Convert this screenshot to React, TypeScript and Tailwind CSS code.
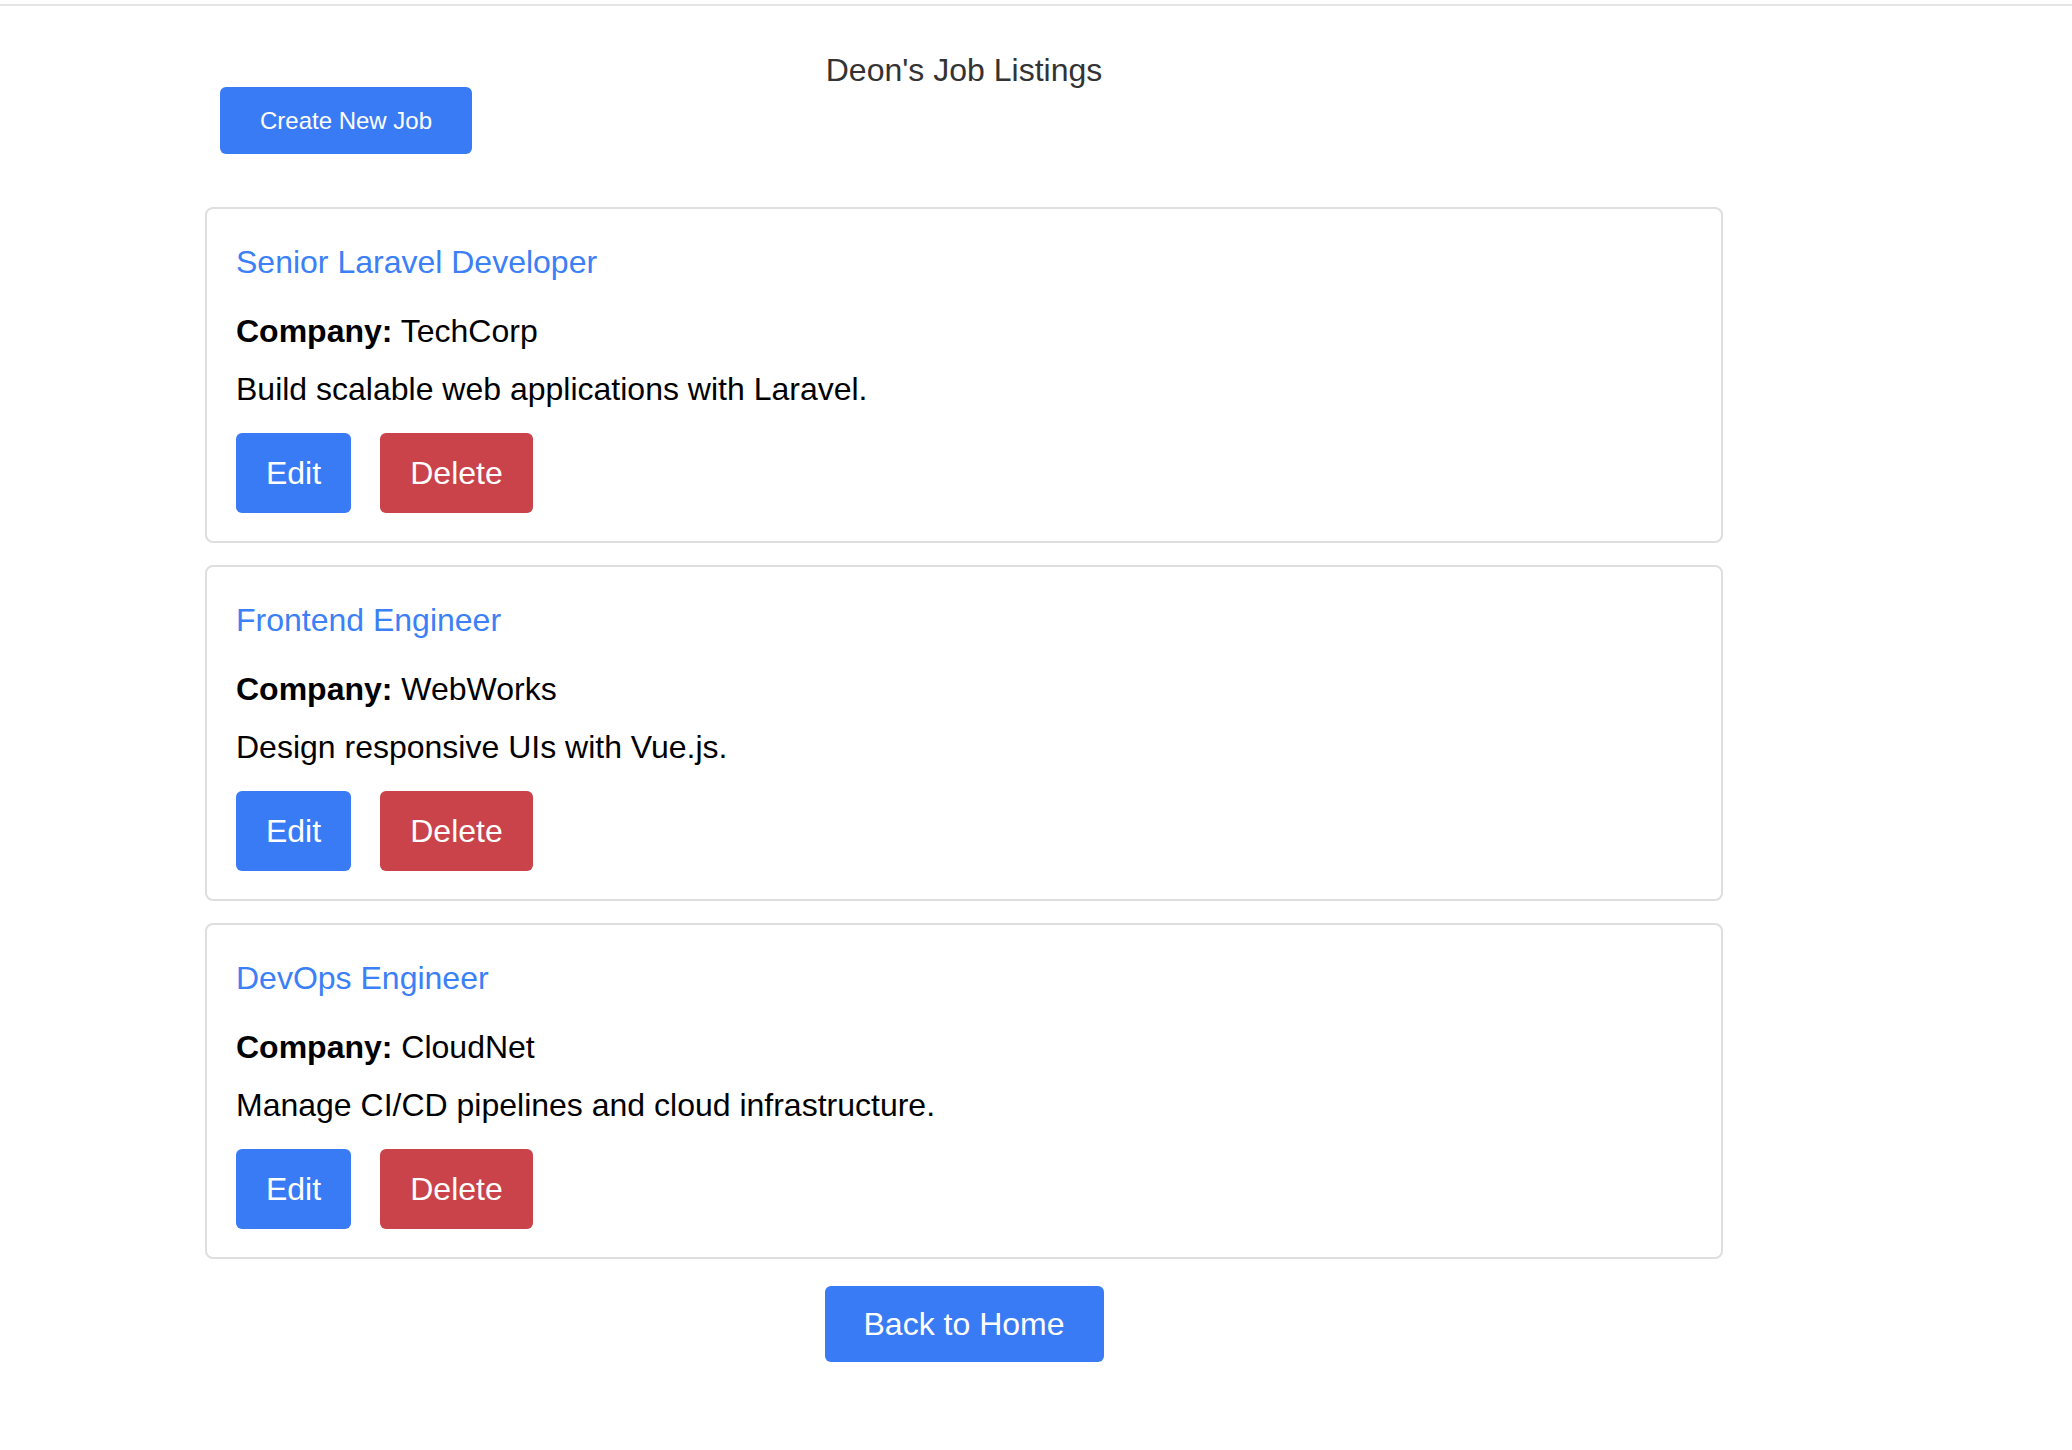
import React from "react";

const jobs = [
  { title: "Senior Laravel Developer", company: "TechCorp", desc: "Build scalable web applications with Laravel." },
  { title: "Frontend Engineer", company: "WebWorks", desc: "Design responsive UIs with Vue.js." },
  { title: "DevOps Engineer", company: "CloudNet", desc: "Manage CI/CD pipelines and cloud infrastructure." },
];

export default function App() {
  return (
    <div className="min-h-[1450px] w-[2072px] bg-white" style={{ fontFamily: '"Liberation Sans", Arial, Helvetica, sans-serif' }}>
      <div className="h-[4px]" />
      <div className="h-[2px] bg-[#e4e4e4]" />
      <div className="ml-[205px] w-[1518px] flex flex-col">
        <h1 className="mt-[48px] mb-[1px] text-center text-[32px] leading-[32px] font-normal text-[#333333]">Deon's Job Listings</h1>
        <div>
          <button className="ml-[15px] w-[252px] h-[67px] rounded-[6px] bg-[#397bf5] text-white text-[24px] leading-[28px]">
            Create New Job
          </button>
        </div>
        <div className="mt-[53px] flex flex-col gap-[22px]">
          {jobs.map((job) => (
            <div key={job.title} className="box-border h-[336px] border-2 border-[#dedede] rounded-[8px] pl-[29px] pt-[35px] flex flex-col">
              <h2 className="text-[32px] leading-[36px] font-normal text-[#3b80f6]">{job.title}</h2>
              <p className="mt-[33px] text-[32px] leading-[36px] text-black">
                <span className="font-bold">Company:</span> {job.company}
              </p>
              <p className="mt-[22px] text-[32px] leading-[36px] text-black">{job.desc}</p>
              <div className="mt-[26px] flex gap-[29px]">
                <button className="w-[115px] h-[80px] rounded-[6px] bg-[#397bf5] text-white text-[32px] leading-[36px]">Edit</button>
                <button className="w-[153px] h-[80px] rounded-[6px] bg-[#ca434a] text-white text-[32px] leading-[36px]">Delete</button>
              </div>
            </div>
          ))}
        </div>
        <div className="mt-[27px] flex justify-center">
          <button className="w-[279px] h-[76px] rounded-[6px] bg-[#397bf5] text-white text-[32px] leading-[36px]">Back to Home</button>
        </div>
      </div>
    </div>
  );
}
